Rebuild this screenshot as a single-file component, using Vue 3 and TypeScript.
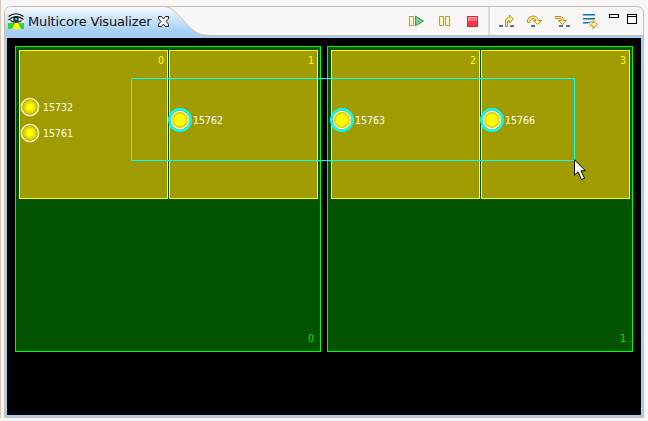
<script setup lang="ts">
interface Thread { pid: number; selected: boolean }
interface Core { id: number; threads: Thread[] }
interface Cpu { id: number; cores: Core[] }

const cpus: Cpu[] = [
  {
    id: 0,
    cores: [
      { id: 0, threads: [{ pid: 15732, selected: false }, { pid: 15761, selected: false }] },
      { id: 1, threads: [{ pid: 15762, selected: true }] },
    ],
  },
  {
    id: 1,
    cores: [
      { id: 2, threads: [{ pid: 15763, selected: true }] },
      { id: 3, threads: [{ pid: 15766, selected: true }] },
    ],
  },
]
</script>

<template>
  <div class="workbench">
    <section class="view">
      <header class="header">
        <svg class="tab-shape" width="207" height="31" viewBox="0 0 207 31">
          <defs>
            <linearGradient id="tabFill" x1="0" y1="0" x2="0" y2="1">
              <stop offset="0" stop-color="#f6faff" />
              <stop offset="0.3" stop-color="#d8eafb" />
              <stop offset="0.8" stop-color="#a6d0f6" />
              <stop offset="1" stop-color="#a4cff6" />
            </linearGradient>
          </defs>
          <path d="M0 31V1H158C165 1 168 4 172 8L184 21C191 27.500 195 29.500 205 29.500V31Z" fill="url(#tabFill)" />
          <path d="M158 .5C165 .8 168 3.500 172 7.500L184 20.500C191 27 195 29.300 207 29.500" fill="none" stroke="#cdbfb0" />
        </svg>
        <div class="tab">
          <svg class="eye" width="16" height="16" viewBox="0 0 16 16">
            <path d="M0 10H16V16H0Z" fill="#39cf3c" />
            <path d="M7 10H10L13 16H4Z" fill="#ff0" />
            <path d="M0 0H16V10H0Z" fill="#e4f0fc" />
            <path d="M1 6Q8 0 15 6Q8 12 1 6Z" fill="#fff" />
            <path d="M.5 3.500Q8-2 15.500 3.500M.5 7Q8 .5 15.500 6.500M2.500 7.500Q8 11 13.500 7.500" fill="none" stroke="#000" stroke-width="1.2" />
            <circle cx="8" cy="6" r="2.700" fill="#000" />
            <circle cx="8" cy="6" r="1.500" fill="#00e0ef" />
          </svg>
          <span class="title">Multicore Visualizer</span>
          <svg class="close" width="11" height="11" viewBox="0 0 11 11">
            <path d="M.5.5H3.500L5.500 2.800 7.500.5H10.500V2.800L8 5.500 10.500 8.200V10.500H7.500L5.500 8.200 3.500 10.500H.5V8.200L3 5.500.5 2.800Z" fill="#fff" stroke="#000" stroke-width=".9" />
          </svg>
        </div>
        <div class="tools">
          <svg width="16" height="16" viewBox="0 0 16 16">
            <rect x="1.5" y="3.5" width="4" height="9" fill="#fff7cc" stroke="#c99a22" />
            <path d="M7.500 3.200L15.500 8 7.500 12.800Z" fill="#7ccb8b" stroke="#2c9a55" />
          </svg>
          <svg width="16" height="16" viewBox="0 0 16 16">
            <path d="M3.500 3.500H7.500V12.500H3.500ZM9.500 3.500H13.500V12.500H9.500Z" fill="#fff5bd" stroke="#c99a22" />
          </svg>
          <svg width="16" height="16" viewBox="0 0 16 16">
            <rect x="3.5" y="3.5" width="10" height="10" fill="#f4364c" stroke="#dc2436" />
            <path d="M4.500 8V4.500H12.500V8" fill="#fb7180" stroke="#ff9ca5" />
          </svg>
          <i class="separator"></i>
          <svg class="step" width="16" height="16" viewBox="0 0 16 16">
            <path d="M1 13H5M12 13H16" stroke="#5b7398" stroke-width="2" />
            <path d="M7.500 13.500V8.500Q7.500 4.500 10.500 4.500H11.500V2L15.500 6 11.500 10V7.500Q9.500 7 9.500 9V13.500Z" fill="#fff2ad" stroke="#c18a19" />
          </svg>
          <svg class="step" width="16" height="16" viewBox="0 0 16 16">
            <path d="M5 13H9" stroke="#5b7398" stroke-width="2" />
            <path d="M1.500 9.500V7Q2.500 3 7 3Q11.500 3 12.500 7.500H15.500L11.500 11.500 7.500 7.500H10Q9.500 5.500 7 5.500Q4 5.500 3.500 9.500Z" fill="#fff2ad" stroke="#c18a19" />
          </svg>
          <svg class="step" width="16" height="16" viewBox="0 0 16 16">
            <path d="M5 13H9M12 13H16" stroke="#5b7398" stroke-width="2" />
            <path d="M1.500 3.500H6Q9.500 3.500 9.500 7.500H12.500L8.500 11.500 4.500 7.500H7.500Q7.500 5.500 5.500 5.500H1.500Z" fill="#fff2ad" stroke="#c18a19" />
          </svg>
          <svg class="filter" width="16" height="16" viewBox="0 0 16 16">
            <path d="M1 1.500H13M1 5.500H13M1 9.500H7" stroke="#176fae" />
            <path d="M1 2.500H13M1 6.500H13M1 10.500H6" stroke="#72b5df" />
            <path d="M7.500 9V10.500Q8 13 11 13V15.500L15.500 11.500 11 7.500V10Q9.500 10 9.500 9Z" fill="#fff2ad" stroke="#c18a19" />
          </svg>
          <i class="minimize"></i>
          <i class="maximize"></i>
        </div>
      </header>
      <main class="canvas">
        <div v-for="cpu in cpus" :key="cpu.id" class="cpu">
          <div class="cores">
            <div v-for="core in cpu.cores" :key="core.id" class="core">
              <span class="core-id">{{ core.id }}</span>
              <div v-for="t in core.threads" :key="t.pid" class="thread">
                <svg width="24" height="24" viewBox="0 0 24 24">
                  <circle v-if="t.selected" cx="12" cy="12" r="10.8" fill="none" stroke="#00ffff" stroke-width="2.2" />
                  <circle cx="12" cy="12" r="8.6" :fill="t.selected ? '#c8c800' : '#a8a500'" stroke="#ffffd8" stroke-width="1.4" />
                  <circle cx="12" cy="12" r="7.2" :fill="t.selected ? '#e8e000' : '#d0cc00'" />
                  <circle cx="12" cy="12" :r="t.selected ? 6 : 5.6" :fill="t.selected ? '#ffff00' : '#e8e500'" />
                  <circle cx="12" cy="12" r="3.2" fill="#ffff00" />
                </svg>
                <span class="pid">{{ t.pid }}</span>
              </div>
            </div>
          </div>
          <span class="cpu-id">{{ cpu.id }}</span>
        </div>
        <div class="selection"></div>
        <svg class="pointer" width="13" height="22" viewBox="0 0 13 22">
          <path d="M.5.8V16.200L4 12.800 7.500 20.500 10.500 19.200 7 11.800H11.500Z" fill="#fff" stroke="#000" />
        </svg>
      </main>
    </section>
  </div>
</template>

<style>
body { margin: 0; background: #f9f7f5; }
</style>

<style scoped>
.workbench {
  box-sizing: border-box;
  width: 648px;
  height: 418px;
  padding: 6px 4px 0 3px;
  border-left: 1px solid #d5c8bd;
  font-family: "DejaVu Sans", sans-serif;
}
.view {
  box-sizing: border-box;
  display: flex;
  flex-direction: column;
  width: 640px;
  height: 412px;
  border: 1px solid #cdbfb0;
  border-radius: 7px 7px 0 0;
  overflow: hidden;
}
.header {
  position: relative;
  box-sizing: border-box;
  flex: none;
  display: flex;
  justify-content: space-between;
  height: 29px;
  border-bottom: 1px solid #cdbfb0;
}
.tab-shape { position: absolute; left: 0; top: -1px; }
.tab {
  position: relative;
  display: flex;
  align-items: center;
  padding: 0 0 0 3px;
}
.title {
  padding-top: 1px;
  margin: 1px 0 0 4px;
  font-size: 13px;
  line-height: 18px;
  letter-spacing: -0.16px;
  color: #111;
  white-space: nowrap;
}
.close { margin-left: 7px; }
.tools { position: relative; display: flex; padding: 6px 6px 0 0; }
.tools svg { flex: none; margin-right: 12px; }
.tools .separator { width: 2px; height: 28px; margin: -6px 8px 0 -4px; background: #dedad6; }
.tools .filter { margin-right: 11px; }
.minimize { box-sizing: border-box; width: 10px; height: 4px; margin: 1px 8px 0 0; border: 1px solid #000; background: #fff; }
.maximize { box-sizing: border-box; width: 10px; height: 10px; margin-top: 1px; border: 1px solid #000; background: linear-gradient(#fff 1px, #000 1px, #000 2px, #fff 2px); }
.canvas {
  position: relative;
  box-sizing: border-box;
  flex: 1;
  display: flex;
  align-items: flex-start;
  gap: 6px;
  padding: 8px;
  border: 2px solid #a6cdf5;
  background: #000;
}
.cpu {
  box-sizing: border-box;
  display: flex;
  flex-direction: column;
  justify-content: space-between;
  width: 306px;
  height: 306px;
  padding: 3px 2px 3px 3px;
  border: 1px solid #0f0;
  background: #005400;
}
.cores { display: flex; gap: 1px; }
.core {
  position: relative;
  box-sizing: border-box;
  flex: none;
  display: flex;
  flex-direction: column;
  justify-content: center;
  gap: 2px;
  width: 149px;
  height: 149px;
  padding-bottom: 9px;
  border: 1px solid #ff0;
  background: #a09c00;
}
.core-id, .pid, .cpu-id {
  font-family: "DejaVu Sans Condensed", "DejaVu Sans", sans-serif;
  font-size: 10.5px;
  line-height: 12px;
}
.core-id { position: absolute; top: 3px; right: 3px; color: #ff0; }
.thread { display: flex; align-items: center; height: 24px; margin-left: -2px; }
.pid { margin-left: 1px; color: #fff; }
.cpu-id { align-self: flex-end; margin: 0 4px 4px; color: #0f0; opacity: .85; }
.selection {
  position: absolute;
  box-sizing: border-box;
  left: 124px;
  top: 40px;
  width: 444px;
  height: 83px;
  border: 1px solid #0ff;
}
.pointer { position: absolute; left: 567px; top: 121px; }
</style>
